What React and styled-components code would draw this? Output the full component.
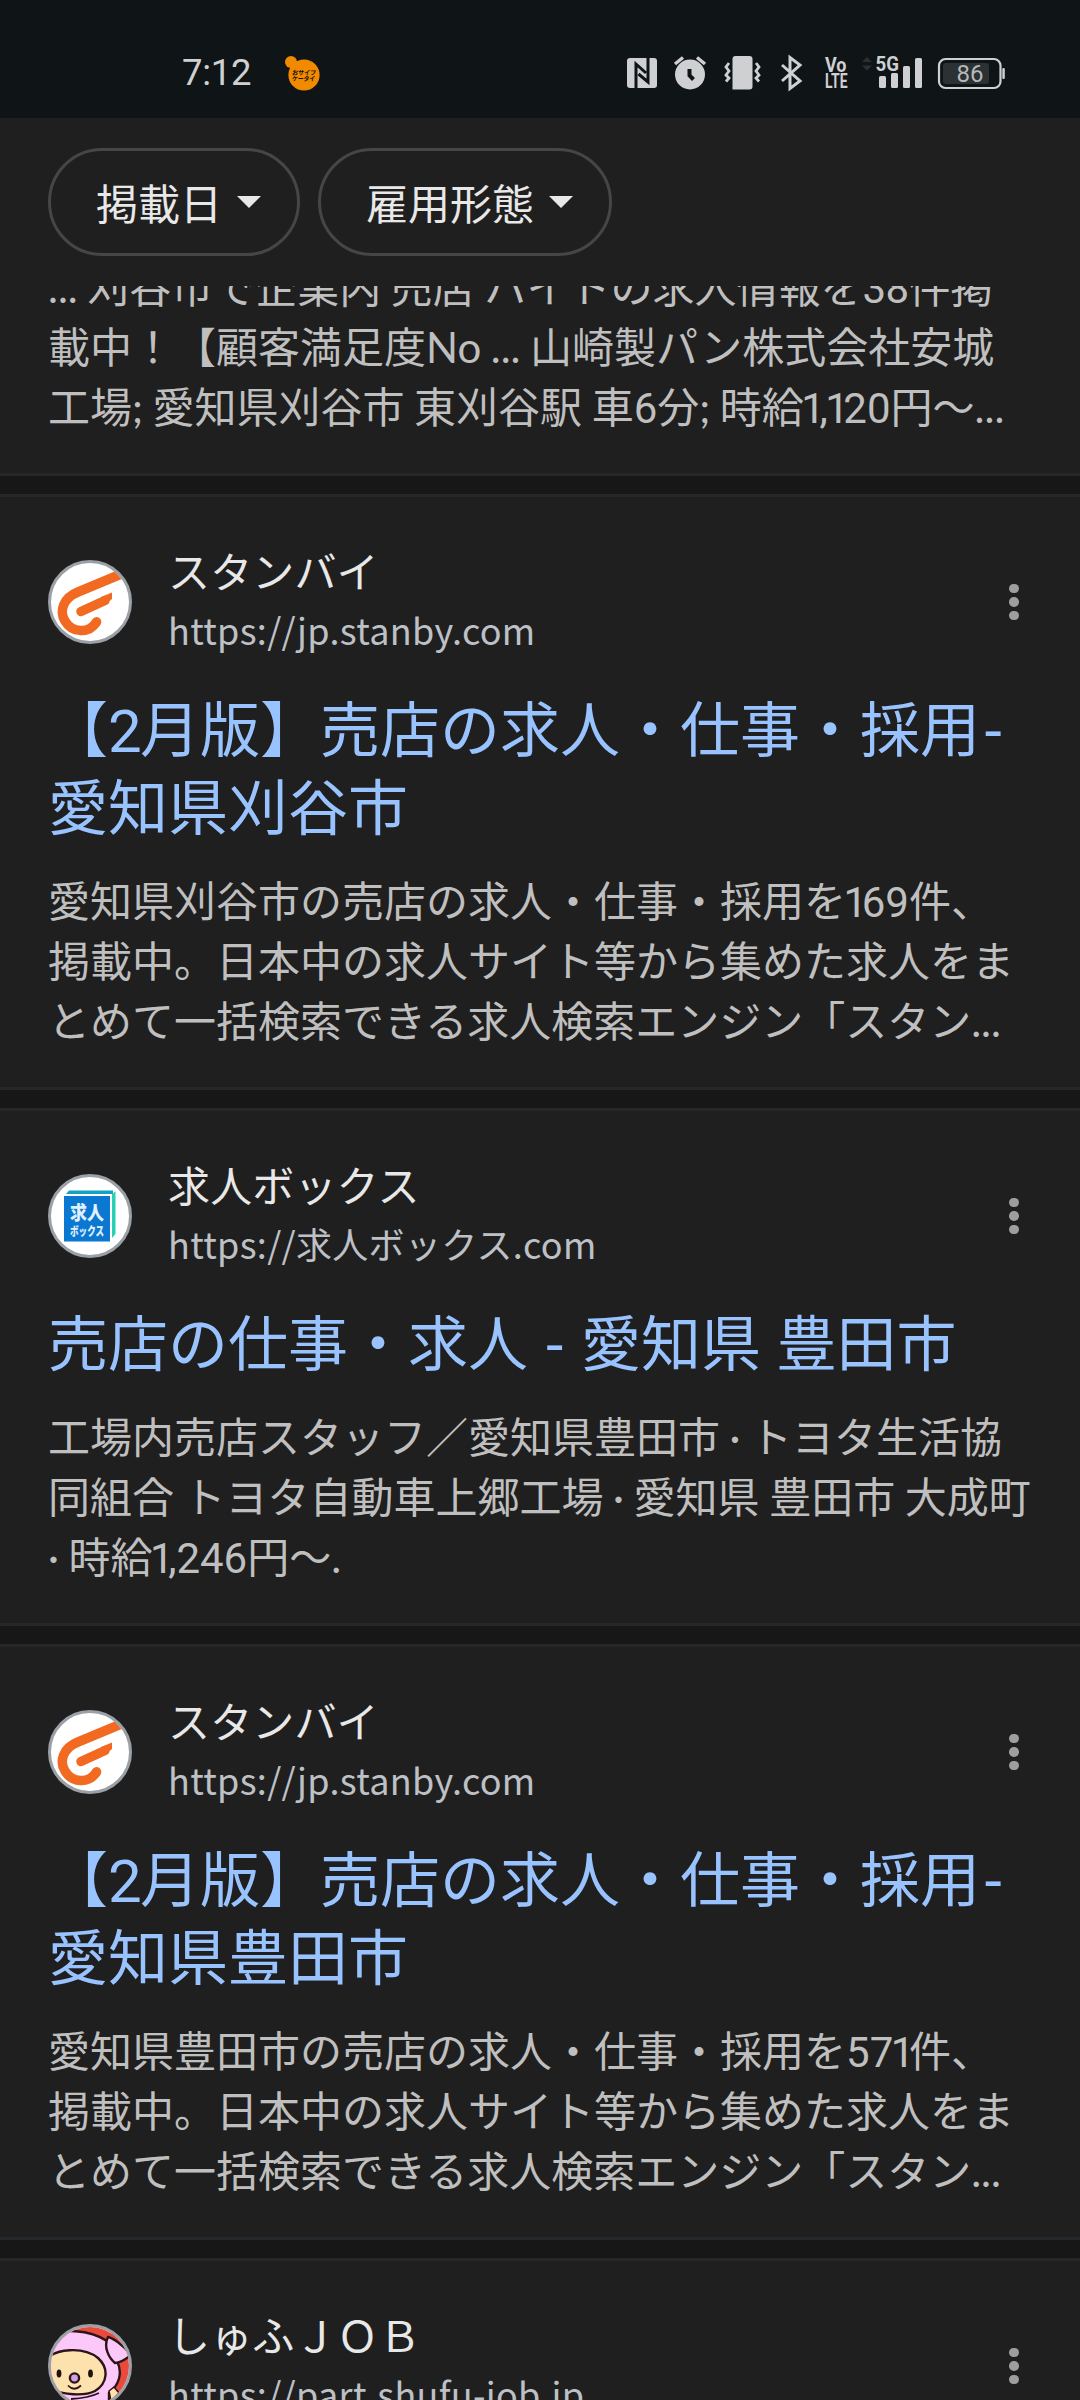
import React from "react";
import styled, { createGlobalStyle } from "styled-components";

const Global = createGlobalStyle`
  * { box-sizing: border-box; }
  html, body { margin: 0; background: #1f1f1f; }
`;

const cjk = '"Noto Sans CJK JP", sans-serif';

const Screen = styled.div`
  width: 1080px;
  height: 2400px;
  overflow: hidden;
  display: flex;
  flex-direction: column;
  background: #1f1f1f;
  font-family: ${cjk};
  text-spacing-trim: space-all;
  color: #e8e8e8;
`;

const StatusBar = styled.header`
  flex: none;
  height: 118px;
  padding: 28px 75px 0 182px;
  display: flex;
  align-items: center;
  justify-content: space-between;
  background: #0f1416;
  color: #cfd0d2;
  font-family: Roboto, sans-serif;
`;

const StatusLeft = styled.div`
  display: flex;
  align-items: center;
  gap: 34px;
`;

const Clock = styled.span`
  font-size: 36.5px;
  line-height: 40px;
  letter-spacing: -0.3px;
`;

const Filters = styled.nav`
  flex: none;
  height: 168px;
  padding: 30px 48px;
  display: flex;
  gap: 18px;
`;

const Chip = styled.button`
  height: 108px;
  padding: 0 36px 0 45px;
  display: flex;
  align-items: center;
  gap: 15px;
  border: 3px solid #444746;
  border-radius: 54px;
  background: transparent;
  color: #e8e8e8;
  font-family: ${cjk};
  font-size: 42px;
  line-height: 60px;
`;

const Caret = styled.i`
  width: 24px;
  height: 12px;
  background: currentColor;
  clip-path: polygon(0 0, 100% 0, 50% 100%);
`;

const Results = styled.main`
  flex: 1;
  min-height: 0;
  overflow: hidden;
  display: flex;
  flex-direction: column;
`;

const Gap = styled.div`
  flex: none;
  height: 24px;
  border: solid #24282b;
  border-width: 3px 0;
  background: #171717;
`;

const Card = styled.article`
  flex: none;
  padding: 0 48px 36px;
  margin-top: ${(p) => p.$offset || 0}px;
`;

const CardHead = styled.div`
  height: 193px;
  padding-top: 45px;
  display: flex;
  align-items: flex-start;
`;

const Avatar = styled.div`
  flex: none;
  width: 84px;
  height: 84px;
  margin: 18px 36px 0 0;
  border: 3px solid #9aa0a6;
  border-radius: 50%;
  overflow: hidden;
  background: #fff;
`;

const Site = styled.div`
  flex: 1;
  display: flex;
  flex-direction: column;
`;

const SiteName = styled.span`
  margin-top: -2px;
  font-size: 42px;
  line-height: 60px;
  letter-spacing: 0.15px;
  white-space: nowrap;
`;

const SiteUrl = styled.span`
  font-size: 36px;
  line-height: 58px;
  letter-spacing: 0.3px;
  color: #bdc1c6;
  white-space: nowrap;
`;

const MenuButton = styled.button`
  width: 36px;
  height: 84px;
  margin: 18px 0 0;
  padding: 0;
  border: 0;
  background: none;
  display: flex;
  flex-direction: column;
  align-items: center;
  justify-content: center;
  gap: 4px;
`;

const Dot = styled.i`
  width: 9.5px;
  height: 9.5px;
  border-radius: 50%;
  background: #9e9e9e;
`;

const Title = styled.h3`
  margin: 0 0 25px;
  font-family: Lato, ${cjk};
  font-size: 60px;
  font-weight: 400;
  line-height: 78px;
  color: #99c3ff;
`;

const Snippet = styled.p`
  margin: 0;
  font-family: Lato, ${cjk};
  font-size: 42px;
  line-height: 60px;
  word-spacing: -1.2px;
  color: #bfbfbf;
`;

const Line = styled.span`
  display: block;
  white-space: nowrap;
`;

const Digits = styled.span`
  font-family: Roboto, sans-serif;
  line-height: 0;
  letter-spacing: ${(p) => p.$track || 0}px;
`;

const One = styled.span`
  margin: 0 -0.13em 0 -0.06em;
`;

const Hyphen = styled.span`
  margin-left: ${(p) => p.$shift || 0}px;
`;

const Num = ({ value, track }) => (
  <Digits $track={track}>
    {[...value].map((d, i) => (d === "1" ? <One key={i}>1</One> : d))}
  </Digits>
);

const OsaifuIcon = () => (
  <svg width="35" height="36" viewBox="0 0 35 36">
    <circle cx="6" cy="7" r="6" fill="#f28a00" />
    <circle cx="19" cy="20" r="15.6" fill="#f28a00" />
    <g transform="skewX(-8)" fill="#15100a" fontFamily="Noto Sans CJK JP" fontWeight="700" fontSize="6.4">
      <text x="9.5" y="20" textLength="24" lengthAdjust="spacingAndGlyphs">おサイフ</text>
      <text x="10.5" y="26" textLength="23" lengthAdjust="spacingAndGlyphs">ケータイ</text>
    </g>
  </svg>
);

const StatusIcons = () => (
  <svg width="380" height="40" viewBox="625 52 380 40" fill="#cfd0d2">
    <rect x="627" y="57" width="30" height="30" rx="3" />
    <path d="M636 87V63L646 72M648 57v24L638.500 73" fill="none" stroke="#0f1416" strokeWidth="3" />
    <circle cx="690" cy="73.500" r="15" />
    <path d="M689.500 68v6.500l4 4" fill="none" stroke="#0f1416" strokeWidth="4" />
    <path d="M675 63l8-6.500M705 63l-8-6.500" stroke="#cfd0d2" strokeWidth="3.400" fill="none" />
    <path d="M732.500 88.500V58q0-3 3-3h14q3 0 3 3v27.500q0 3-3 3z" />
    <path d="M729 62l-3 4 3 4-3 4 3 3-3 3.500M756 62l3 4-3 4 3 4-3 3 3 3.500" stroke="#cfd0d2" strokeWidth="2.800" fill="none" />
    <path d="M782 64l18 16-10 7.500v-31l10 7.500-18 16" stroke="#cfd0d2" strokeWidth="3" fill="none" />
    <g fontFamily="Roboto" fontWeight="700">
      <text x="825" y="71" fontSize="19.500" textLength="21.500" lengthAdjust="spacingAndGlyphs">Vo</text>
      <text x="825" y="87" fontSize="19.500" textLength="22.500" lengthAdjust="spacingAndGlyphs">LTE</text>
      <text x="875.500" y="70" fontSize="21" textLength="23.500" lengthAdjust="spacingAndGlyphs">5G</text>
    </g>
    <path d="M862 61l5-5 5 5zM862 64.500l5 5 5-5z" fill="#2b3032" />
    <rect x="879" y="75" width="7" height="12" rx="1.500" />
    <rect x="891" y="72" width="7" height="15" rx="1.500" />
    <rect x="903" y="65" width="7" height="22" rx="1.500" />
    <rect x="915" y="57" width="7" height="30" rx="1.500" />
    <rect x="939" y="58" width="61.500" height="29" rx="6.500" fill="none" stroke="#cfd0d2" strokeWidth="2.200" />
    <rect x="943" y="62" width="46" height="21" rx="3" fill="#2c3133" />
    <rect x="1002.300" y="67" width="2.500" height="11" rx="1" />
    <text x="970" y="81" fontSize="24" fontFamily="Roboto" textAnchor="middle" fill="#b6b8ba">86</text>
  </svg>
);

const StanbyLogo = () => (
  <svg width="78" height="78" viewBox="0 0 78 78" fill="none" stroke="#f26a21" strokeWidth="9.500" strokeLinecap="round">
    <path d="M69 11.500L27 29C12 35 8 48 14 58C21 70 38 71 45.500 59" strokeLinecap="butt" />
    <path d="M45.300 59.300L45.600 58.800" />
    <path d="M30 48.500L54 37.500" />
    <path d="M50 34L61 29.500V36L56 40z" fill="#f26a21" stroke="none" />
  </svg>
);

const KyujinBoxLogo = () => (
  <svg width="78" height="78" viewBox="0 0 78 78">
    <path d="M18 13.500h44v3.500H15z" fill="#12a3c4" />
    <path d="M61 17.500l3.500-3.500v43l-3.500 4z" fill="#2ad0b4" />
    <rect x="13" y="19" width="46" height="45.500" fill="#0a78d0" />
    <g fill="#e0f0ff" fontFamily="Noto Sans CJK JP" fontWeight="900">
      <text x="19" y="42.500" fontSize="19" textLength="34" lengthAdjust="spacingAndGlyphs">求人</text>
      <text x="19" y="58.500" fontSize="12" textLength="34" lengthAdjust="spacingAndGlyphs">ボックス</text>
    </g>
  </svg>
);

const ShufuLogo = () => (
  <svg width="78" height="78" viewBox="0 0 78 78" stroke="#2a1518" strokeWidth="2.400">
    <rect width="78" height="78" fill="#ea4a3c" stroke="none" />
    <path d="M-4 8C10 2 38 2 56 14L66 34C72 46 68 58 58 66V80H-4z" fill="#fcc8fa" />
    <path d="M57 10C62 11 72 18 80 28C74 33 69 36 64 36C58 31 52 20 57 10z" fill="#fcc8fa" />
    <path d="M58 64l5-4 5 6-8 8z" fill="#fde2ae" strokeWidth="1.500" />
    <path d="M-4 32C4 22 32 19 47 31C58 41 57 56 44 64C34 69 12 69 -4 60z" fill="#fde2ae" />
    <path d="M20 72Q38 71 48 66" fill="none" strokeWidth="1.800" />
    <g stroke="none" fill="#20120e">
      <ellipse cx="8" cy="46.500" rx="2.400" ry="4" />
      <ellipse cx="39.500" cy="46.500" rx="2.400" ry="4" />
    </g>
    <circle cx="23.500" cy="51" r="4.600" fill="#d9a0e0" />
    <path d="M17 58.500Q23 65 30 58.500" fill="none" strokeWidth="1.800" />
  </svg>
);

function Result({ logo, name, url, title, lines }) {
  return (
    <Card>
      <CardHead>
        <Avatar>{logo}</Avatar>
        <Site>
          <SiteName>{name}</SiteName>
          <SiteUrl>{url}</SiteUrl>
        </Site>
        <MenuButton aria-label="menu">
          <Dot />
          <Dot />
          <Dot />
        </MenuButton>
      </CardHead>
      {title && (
        <Title>
          {title.map((t, i) => (
            <Line key={i}>{t}</Line>
          ))}
        </Title>
      )}
      {lines && (
        <Snippet>
          {lines.map((t, i) => (
            <Line key={i}>{t}</Line>
          ))}
        </Snippet>
      )}
    </Card>
  );
}

const stanbyTitle = (city) => [
  <>【<Num value="2" track={-1.7} />月版】売店の求人・仕事・採用<Hyphen $shift={2}>-</Hyphen></>,
  city,
];

const stanbyLines = (city, count) => [
  <>{city}の売店の求人・仕事・採用を<Num value={count} />件、</>,
  "掲載中。日本中の求人サイト等から集めた求人をま",
  "とめて一括検索できる求人検索エンジン「スタン...",
];

export default function App() {
  return (
    <Screen>
      <Global />
      <StatusBar>
        <StatusLeft>
          <Clock>7:12</Clock>
          <OsaifuIcon />
        </StatusLeft>
        <StatusIcons />
      </StatusBar>
      <Filters>
        <Chip>掲載日<Caret /></Chip>
        <Chip>雇用形態<Caret /></Chip>
      </Filters>
      <Results>
        <Card $offset={-29}>
          <Snippet>
            <Line>... 刈谷市で企業内 売店 バイトの求人情報を<Num value="38" track={-0.6} />件掲</Line>
            <Line>載中！【顧客満足度No ... 山崎製パン株式会社安城</Line>
            <Line>工場; 愛知県刈谷市 東刈谷駅 車<Num value="6" />分; 時給<Num value="1,120" />円〜...</Line>
          </Snippet>
        </Card>
        <Gap />
        <Result
          logo={<StanbyLogo />}
          name="スタンバイ"
          url="https://jp.stanby.com"
          title={stanbyTitle("愛知県刈谷市")}
          lines={stanbyLines("愛知県刈谷市", "169")}
        />
        <Gap />
        <Result
          logo={<KyujinBoxLogo />}
          name="求人ボックス"
          url="https://求人ボックス.com"
          title={[<>売店の仕事・求人 <Hyphen>-</Hyphen> 愛知県 豊田市</>]}
          lines={[
            "工場内売店スタッフ／愛知県豊田市 · トヨタ生活協",
            "同組合 トヨタ自動車上郷工場 · 愛知県 豊田市 大成町",
            <>· 時給<Num value="1,246" />円〜.</>,
          ]}
        />
        <Gap />
        <Result
          logo={<StanbyLogo />}
          name="スタンバイ"
          url="https://jp.stanby.com"
          title={stanbyTitle("愛知県豊田市")}
          lines={stanbyLines("愛知県豊田市", "571")}
        />
        <Gap />
        <Result logo={<ShufuLogo />} name="しゅふＪＯＢ" url="https://part.shufu-job.jp" />
      </Results>
    </Screen>
  );
}
